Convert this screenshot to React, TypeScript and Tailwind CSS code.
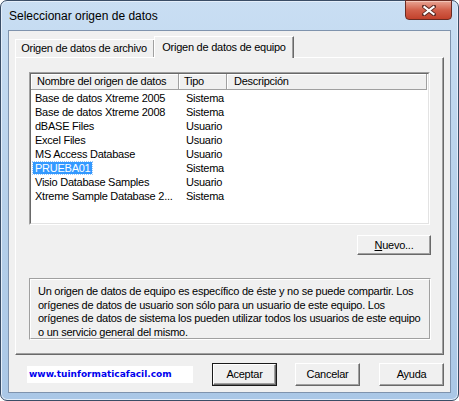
const rows = [
  { name: "Base de datos Xtreme 2005", tipo: "Sistema" },
  { name: "Base de datos Xtreme 2008", tipo: "Sistema" },
  { name: "dBASE Files", tipo: "Usuario" },
  { name: "Excel Files", tipo: "Usuario" },
  { name: "MS Access Database", tipo: "Usuario" },
  { name: "PRUEBA01", tipo: "Sistema", selected: true },
  { name: "Visio Database Samples", tipo: "Usuario" },
  { name: "Xtreme Sample Database 2...", tipo: "Sistema" },
];

const ui =
  "font-['Liberation_Sans',Arial,sans-serif] text-[11px] tracking-[-0.25px] whitespace-nowrap text-black";

function ClassicButton({
  children,
  isDefault,
  className,
}: {
  children: React.ReactNode;
  isDefault?: boolean;
  className?: string;
}) {
  return (
    <div
      className={`${className ?? ""} ${
        isDefault ? "border border-[#1a1a1a]" : ""
      }`}
    >
      <div className="flex h-full w-full items-center justify-center border border-t-white border-l-white border-r-[#696969] border-b-[#696969] bg-[#f0f0f0] shadow-[inset_-1px_-1px_0_#a0a0a0]">
        {children}
      </div>
    </div>
  );
}

function CloseIcon() {
  return (
    <svg width="14" height="11" viewBox="0 0 14 11">
      <path
        d="M2 1.5 L12 9.5 M12 1.5 L2 9.5"
        stroke="#5a2a24"
        strokeWidth="4"
        strokeLinecap="round"
      />
      <path
        d="M2.5 2 L11.5 9 M11.5 2 L2.5 9"
        stroke="#ffffff"
        strokeWidth="2.2"
        strokeLinecap="square"
      />
    </svg>
  );
}

export default function App() {
  return (
    <div className="h-[401px] w-[459px] bg-white">
      <div className="relative flex h-full w-full flex-col rounded-[7px] border border-[#3a4d66] bg-gradient-to-b from-[#c9def3] via-[#b6d0ea] to-[#aac7e6] px-[7px] pb-[7px] shadow-[inset_0_0_0_1px_#e4eefa]">
        {/* title bar */}
        <div className="flex h-[29px] items-center pl-[1px]">
          <span className="font-['Liberation_Sans',Arial,sans-serif] text-[12px] text-black">
            Seleccionar origen de datos
          </span>
        </div>
        <div className="absolute right-[6px] top-[-1px] flex h-[20px] w-[47px] items-center justify-center rounded-b-[4px] border border-[#6b2b22] bg-gradient-to-b from-[#e8a595] via-[#d2604b] to-[#c2412b] shadow-[inset_0_1px_0_#f3c4b8]">
          <CloseIcon />
        </div>

        {/* client area */}
        <div className={`flex flex-1 flex-col border border-[#7f93ad] bg-[#f0f0f0] ${ui}`}>
          {/* tabs */}
          <div className="ml-[6px] mt-[6px] w-[429px]">
            <div className="flex h-[20px] items-end">
              <div className="flex h-[18px] w-[140px] items-center justify-center border border-b-0 border-t-white border-l-white border-r-[#696969] pr-[2px] shadow-[inset_-1px_0_0_#a0a0a0]">
                Origen de datos de archivo
              </div>
              <div className="relative z-10 -mb-[1px] -ml-[1px] flex h-[22px] w-[140px] items-start justify-center border border-b-0 border-t-white border-l-white border-r-[#696969] bg-[#f0f0f0] pt-[2px] shadow-[inset_-1px_0_0_#a0a0a0]">
                Origen de datos de equipo
              </div>
            </div>

            {/* tab panel */}
            <div className="flex h-[298px] flex-col border border-t-white border-l-white border-r-[#696969] border-b-[#696969] pl-[13px] pt-[14px] shadow-[inset_-1px_-1px_0_#a0a0a0]">
              {/* list view */}
              <div className="h-[153px] w-[401px] border border-t-[#a0a0a0] border-l-[#a0a0a0] border-r-white border-b-white">
                <div className="h-full w-full border border-t-[#696969] border-l-[#696969] border-r-[#e3e3e3] border-b-[#e3e3e3] bg-white">
                  <div className="flex h-[16px]">
                    <div className="flex w-[148px] items-center border-b border-r border-[#a0a0a0] bg-[#f0f0f0] pl-[6px] shadow-[inset_1px_1px_0_#ffffff]">
                      Nombre del origen de datos
                    </div>
                    <div className="flex w-[48px] items-center border-b border-r border-[#a0a0a0] bg-[#f0f0f0] pl-[5px] shadow-[inset_1px_1px_0_#ffffff]">
                      Tipo
                    </div>
                    <div className="flex w-[200px] items-center border-b border-r border-[#a0a0a0] bg-[#f0f0f0] pl-[7px] shadow-[inset_1px_1px_0_#ffffff]">
                      Descripción
                    </div>
                  </div>
                  <div className="pt-[1px]">
                    {rows.map((r) => (
                      <div key={r.name} className="flex h-[14px] items-center">
                        <div className="w-[148px] pl-[2px]">
                          <span
                            className={`px-[2px] ${
                              r.selected
                                ? "bg-[#3399ff] text-white outline-1 outline-dotted outline-[#9fc9f5]"
                                : ""
                            }`}
                          >
                            {r.name}
                          </span>
                        </div>
                        <div className="w-[48px] pl-[7px]">{r.tipo}</div>
                      </div>
                    ))}
                  </div>
                </div>
              </div>

              {/* Nuevo */}
              <div className="mt-[10px] flex w-[402px] justify-end">
                <ClassicButton className="h-[20px] w-[74px]">
                  <span>
                    <span className="underline">N</span>uevo...
                  </span>
                </ClassicButton>
              </div>

              {/* group box */}
              <div className="mt-[23px] h-[62px] w-[402px] border border-t-[#a0a0a0] border-l-[#a0a0a0] border-r-white border-b-white">
                <div className="h-full w-full border border-t-white border-l-white border-r-[#a0a0a0] border-b-[#a0a0a0] pl-[7px] pt-[5px] leading-[13.6px]">
                  Un origen de datos de equipo es específico de éste y no se puede compartir. Los
                  <br />
                  orígenes de datos de usuario son sólo para un usuario de este equipo. Los
                  <br />
                  orígenes de datos de sistema los pueden utilizar todos los usuarios de este equipo
                  <br />o un servicio general del mismo.
                </div>
              </div>
            </div>
          </div>

          {/* bottom buttons */}
          <div className="mt-[8px] flex h-[23px] items-center">
            <div className="ml-[18px] flex h-[17px] w-[166px] items-center bg-white pl-[2px]">
              <span className="font-['DejaVu_Sans',Verdana,sans-serif] text-[9px] font-bold tracking-normal text-[#0000ee]">
                www.tuinformaticafacil.com
              </span>
            </div>
            <ClassicButton isDefault className="ml-[19px] h-[23px] w-[65px]">
              Aceptar
            </ClassicButton>
            <ClassicButton className="ml-[18px] h-[23px] w-[65px]">Cancelar</ClassicButton>
            <ClassicButton className="ml-[19px] h-[23px] w-[65px]">Ayuda</ClassicButton>
          </div>
        </div>
      </div>
    </div>
  );
}
